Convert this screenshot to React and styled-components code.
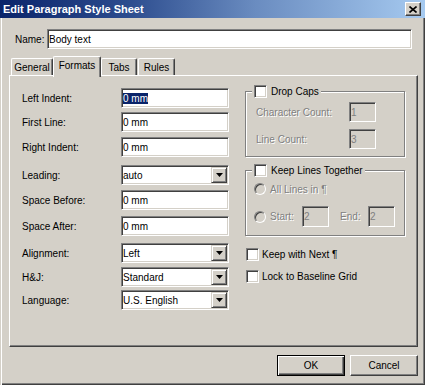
import styled, { createGlobalStyle } from "styled-components";

const Global = createGlobalStyle`
  html, body { margin: 0; padding: 0; background: #d4d0c8; }
  body { font-family: "Liberation Sans", Arial, sans-serif; font-size: 10px; color: #000; }
  * { box-sizing: border-box; }
`;

const Window = styled.div`
  width: 425px;
  height: 385px;
  display: flex;
  flex-direction: column;
  background: #d4d0c8;
`;

const TitleBar = styled.div`
  height: 18px;
  flex: none;
  display: flex;
  align-items: center;
  justify-content: space-between;
  padding: 0 4px 0 3px;
  background: linear-gradient(to right, #0a246a 0%, #2c4c8e 30%, #6a8cc0 60%, #a6caf0 100%);
  color: #fff;
  font-weight: bold;
  font-size: 11px;
`;

const CloseBtn = styled.div`
  width: 16px;
  height: 14px;
  display: flex;
  align-items: center;
  justify-content: center;
  background: #d4d0c8;
  border: 1px solid;
  border-color: #fff #404040 #404040 #fff;
  box-shadow: inset -1px -1px #808080;
`;

const Body = styled.div`
  flex: 1;
  display: flex;
  flex-direction: column;
  padding: 11px 7px 0 9px;
  box-shadow: inset 1px 0 #d4d0c8, inset 2px 0 #fff, inset -1px -1px #404040, inset -2px -2px #808080;
`;

const NameRow = styled.div`
  display: flex;
  align-items: center;
  padding: 0 6px;
  height: 20px;
`;

const NameLabel = styled.span`
  width: 32px;
`;

const Field = styled.div`
  height: ${(p) => p.$h || 20}px;
  width: ${(p) => (p.$w ? p.$w + "px" : "auto")};
  flex: ${(p) => (p.$w ? "none" : 1)};
  display: flex;
  align-items: center;
  padding-left: 1px;
  background: ${(p) => (p.$disabled ? "#d4d0c8" : "#fff")};
  color: ${(p) => (p.$disabled ? "#808080" : "#000")};
  border: 1px solid;
  border-color: #808080 #fff #fff #808080;
  box-shadow: inset 1px 1px #404040, inset -1px -1px #d4d0c8;
  white-space: nowrap;
`;

const Selected = styled.span`
  background: #0a246a;
  color: #fff;
`;

const TabStrip = styled.div`
  margin-top: 7px;
  height: 19px;
  display: flex;
  align-items: flex-end;
  padding-left: 2px;
  position: relative;
  z-index: 1;
`;

const Tab = styled.div`
  width: ${(p) => p.$w}px;
  margin-left: ${(p) => p.$ml || 0}px;
  height: ${(p) => (p.$active ? 21 : 17)}px;
  margin-bottom: ${(p) => (p.$active ? -2 : 0)}px;
  display: flex;
  align-items: ${(p) => (p.$active ? "flex-start" : "center")};
  padding-top: ${(p) => (p.$active ? 3 : 0)}px;
  justify-content: center;
  background: #d4d0c8;
  border-top: 1px solid #fff;
  border-left: 1px solid #fff;
  border-right: 1px solid #404040;
  border-radius: 2px 2px 0 0;
  box-shadow: inset -1px 0 #808080;
`;

const Panel = styled.div`
  height: 272px;
  flex: none;
  border: 1px solid;
  border-color: #fff #404040 #404040 #fff;
  box-shadow: inset -1px -1px #808080;
  padding: 9px 0 0 12px;
  display: flex;
  gap: 16px;
`;

const LeftCol = styled.div`
  width: 207px;
  padding-top: 3px;
  display: flex;
  flex-direction: column;
`;

const FormRow = styled.div`
  display: flex;
  align-items: center;
  height: ${(p) => (p.$h ? p.$h + "px" : "auto")};
  margin-top: ${(p) => p.$mt || 0}px;
`;

const Label = styled.span`
  width: ${(p) => (p.$w ? p.$w + "px" : "auto")};
  flex: none;
  color: ${(p) => (p.$disabled ? "#808080" : "#000")};
  text-shadow: ${(p) => (p.$disabled ? "1px 1px #fff" : "none")};
  margin-left: ${(p) => p.$ml || 0}px;
  white-space: nowrap;
`;

const DropBtn = styled.div`
  margin-left: auto;
  margin-right: 1px;
  width: 16px;
  height: 16px;
  flex: none;
  display: flex;
  align-items: center;
  justify-content: center;
  background: #d4d0c8;
  border: 1px solid;
  border-color: #d4d0c8 #404040 #404040 #d4d0c8;
  box-shadow: inset 1px 1px #fff, inset -1px -1px #808080;
`;

const RightCol = styled.div`
  width: 160px;
  display: flex;
  flex-direction: column;
`;

const Group = styled.fieldset`
  margin: ${(p) => p.$mt || 0}px 0 0 0;
  padding: ${(p) => p.$pt}px 0 ${(p) => p.$pb}px 0;
  min-width: 0;
  border: 1px solid #808080;
  box-shadow: 1px 1px #fff, inset 1px 1px #fff;
`;

const GroupBody = styled.div`
  padding-left: ${(p) => p.$pl}px;
  display: flex;
  flex-direction: column;
`;

const Legend = styled.legend`
  margin-left: 6px;
  padding: 0 2px;
  display: flex;
  align-items: center;
  gap: 4px;
  height: 13px;
  background: #d4d0c8;
`;

const Check = styled.span`
  width: 13px;
  height: 13px;
  flex: none;
  background: #fff;
  border: 1px solid;
  border-color: #808080 #fff #fff #808080;
  box-shadow: inset 1px 1px #404040, inset -1px -1px #d4d0c8;
`;

const Radio = styled.span`
  width: 12px;
  height: 12px;
  flex: none;
  border-radius: 50%;
  background: #d4d0c8;
  border: 1px solid;
  border-color: #808080 #fff #fff #808080;
  box-shadow: inset 1px 1px #404040;
  margin-right: 4px;
`;

const CheckRow = styled.div`
  display: flex;
  align-items: center;
  gap: 3px;
  margin-top: ${(p) => p.$mt}px;
  padding-left: 1px;
`;

const ButtonRow = styled.div`
  margin-top: 8px;
  display: flex;
  justify-content: flex-end;
  gap: 5px;
`;

const Button = styled.div`
  width: 68px;
  height: 21px;
  display: flex;
  align-items: center;
  justify-content: center;
  background: #d4d0c8;
  border: 1px solid;
  border-color: ${(p) => (p.$default ? "#000" : "#fff #404040 #404040 #fff")};
  box-shadow: ${(p) =>
    p.$default
      ? "inset 1px 1px #fff, inset -1px -1px #404040, inset -2px -2px #808080"
      : "inset -1px -1px #808080"};
`;

const Arrow = () => (
  <svg width="7" height="4" viewBox="0 0 7 4">
    <path d="M0 0h7L3.5 4z" fill="#000" />
  </svg>
);

const leftRows = [
  { label: "Left Indent:", value: "0 mm", mt: 0, sel: true },
  { label: "First Line:", value: "0 mm", mt: 4 },
  { label: "Right Indent:", value: "0 mm", mt: 5 },
  { label: "Leading:", value: "auto", mt: 8, drop: true },
  { label: "Space Before:", value: "0 mm", mt: 5 },
  { label: "Space After:", value: "0 mm", mt: 6 },
  { label: "Alignment:", value: "Left", mt: 7, drop: true },
  { label: "H&J:", value: "Standard", mt: 4, drop: true },
  { label: "Language:", value: "U.S. English", mt: 3, drop: true },
];

export default function App() {
  return (
    <Window>
      <Global />
      <TitleBar>
        <span>Edit Paragraph Style Sheet</span>
        <CloseBtn>
          <svg width="8" height="7" viewBox="0 0 8 7">
            <path d="M0.5 0.5L7.5 6.5M7.5 0.5L0.5 6.5" stroke="#000" strokeWidth="1.6" />
          </svg>
        </CloseBtn>
      </TitleBar>
      <Body>
        <NameRow>
          <NameLabel>Name:</NameLabel>
          <Field>Body text</Field>
        </NameRow>
        <TabStrip>
          <Tab $w={42}>General</Tab>
          <Tab $w={48} $active>Formats</Tab>
          <Tab $w={36}>Tabs</Tab>
          <Tab $w={37} $ml={1}>Rules</Tab>
        </TabStrip>
        <Panel>
          <LeftCol>
            {leftRows.map((r) => (
              <FormRow key={r.label} $mt={r.mt}>
                <Label $w={99}>{r.label}</Label>
                <Field $w={108}>
                  {r.sel ? <Selected>{r.value}</Selected> : r.value}
                  {r.drop && (
                    <DropBtn>
                      <Arrow />
                    </DropBtn>
                  )}
                </Field>
              </FormRow>
            ))}
          </LeftCol>
          <RightCol>
            <Group $pt={4} $pb={7}>
              <Legend>
                <Check />
                <span>Drop Caps</span>
              </Legend>
              <GroupBody $pl={10}>
                <FormRow>
                  <Label $w={93} $disabled>Character Count:</Label>
                  <Field $w={27} $disabled>1</Field>
                </FormRow>
                <FormRow $mt={7}>
                  <Label $w={93} $disabled>Line Count:</Label>
                  <Field $w={27} $disabled>3</Field>
                </FormRow>
              </GroupBody>
            </Group>
            <Group $mt={7} $pt={2} $pb={8}>
              <Legend>
                <Check />
                <span>Keep Lines Together</span>
              </Legend>
              <GroupBody $pl={8}>
                <FormRow $h={20}>
                  <Radio />
                  <Label $disabled>All Lines in ¶</Label>
                </FormRow>
                <FormRow $mt={7}>
                  <Radio />
                  <Label $w={32} $disabled>Start:</Label>
                  <Field $w={27} $h={21} $disabled>2</Field>
                  <Label $w={28} $ml={11} $disabled>End:</Label>
                  <Field $w={27} $h={21} $disabled>2</Field>
                </FormRow>
              </GroupBody>
            </Group>
            <CheckRow $mt={12}>
              <Check />
              <span>Keep with Next ¶</span>
            </CheckRow>
            <CheckRow $mt={9}>
              <Check />
              <span>Lock to Baseline Grid</span>
            </CheckRow>
          </RightCol>
        </Panel>
        <ButtonRow>
          <Button $default>OK</Button>
          <Button>Cancel</Button>
        </ButtonRow>
      </Body>
    </Window>
  );
}
